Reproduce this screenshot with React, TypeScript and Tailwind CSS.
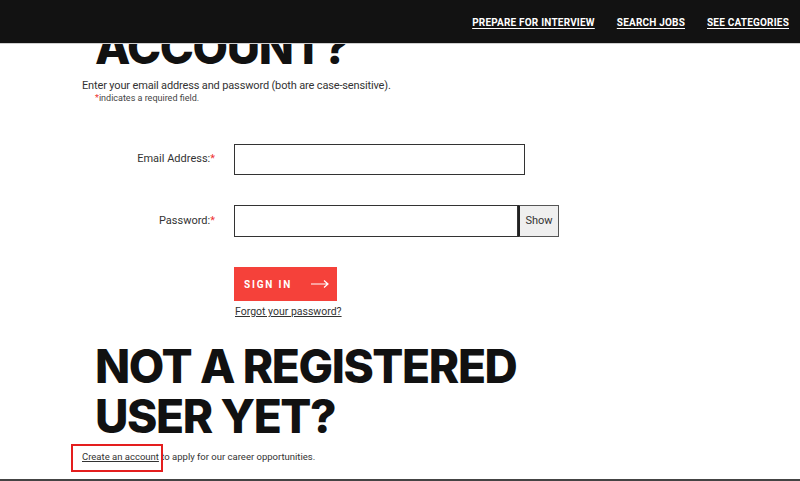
import React from "react";

const body = { fontFamily: '"Roboto", "Liberation Sans", sans-serif' };
const head = { fontFamily: '"Inter", "Liberation Sans", sans-serif' };

export default function App() {
  return (
    <div className="relative w-[800px] h-[481px] overflow-hidden bg-white text-[#222]" style={body}>
      <header className="absolute top-0 left-0 right-0 z-10 h-[44px] bg-[#121212] border-b border-[#cfcfcf] flex items-center justify-end pr-[11px] gap-[22px] pt-[1px]">
        <a className="text-white text-[10px] font-bold tracking-[0.02em] underline underline-offset-2">PREPARE FOR INTERVIEW</a>
        <a className="text-white text-[10px] font-bold tracking-[0.02em] underline underline-offset-2">SEARCH JOBS</a>
        <a className="text-white text-[10px] font-bold tracking-[0.02em] underline underline-offset-2">SEE CATEGORIES</a>
      </header>

      <main className="flex flex-col">
        <h1 className="ml-[95px] mt-[22px] text-[46px] leading-[50px] font-extrabold tracking-[-0.03em] text-[#111]" style={head}>ACCOUNT?</h1>
        <p className="ml-[82px] mt-[7px] text-[11px] leading-[13px] tracking-[-0.15px] text-[#333]">Enter your email address and password (both are case-sensitive).</p>
        <p className="ml-[95px] mt-[1px] text-[9px] leading-[11px] text-[#444]"><span className="text-[#e33]">*</span>indicates a required field.</p>

        <div className="mt-[40px] flex items-center">
          <label className="w-[215px] text-right text-[11px] text-[#333]">Email Address:<span className="text-[#e33]">*</span></label>
          <div className="ml-[19px] w-[291px] h-[31px] border border-[#333]"></div>
        </div>
        <div className="mt-[30px] flex items-center">
          <label className="w-[215px] text-right text-[11px] text-[#333]">Password:<span className="text-[#e33]">*</span></label>
          <div className="ml-[19px] w-[284px] h-[32px] border border-[#333]"></div>
          <div className="w-[41px] h-[32px] border border-[#555] border-l-2 border-l-[#222] bg-[#efefef] flex items-center justify-center text-[11px] text-[#333]">Show</div>
        </div>

        <div className="ml-[234px] mt-[30px] flex flex-col items-start">
          <button className="w-[103px] h-[34px] bg-[#f5413a] flex items-center justify-between pl-[10px] pr-[8px]">
            <span className="text-white text-[10px] font-bold tracking-[0.18em]">SIGN IN</span>
            <svg width="18" height="8" viewBox="0 0 18 8" fill="none" stroke="white" strokeWidth="1.2">
              <path d="M0 4H17M13 0.5L17 4L13 7.5" />
            </svg>
          </button>
          <a className="mt-[3px] ml-[1px] text-[10.5px] text-[#333] underline">Forgot your password?</a>
        </div>

        <h2 className="ml-[95px] mt-[21px] text-[46px] leading-[50px] font-extrabold tracking-[-0.03em] text-[#111]" style={head}>NOT A REGISTERED<br />USER YET?</h2>

        <p className="relative ml-[82px] mt-[10px] text-[9.5px] leading-[12px] text-[#333]">
          <span className="underline">Create an account</span> to apply for our career opportunities.
          <span className="absolute left-[-11px] top-[-7px] w-[92px] h-[28px] border-2 border-[#e41e1e]"></span>
        </p>
      </main>
      <div className="absolute left-0 right-0 bottom-0 h-[2px] bg-[#444]"></div>
    </div>
  );
}
